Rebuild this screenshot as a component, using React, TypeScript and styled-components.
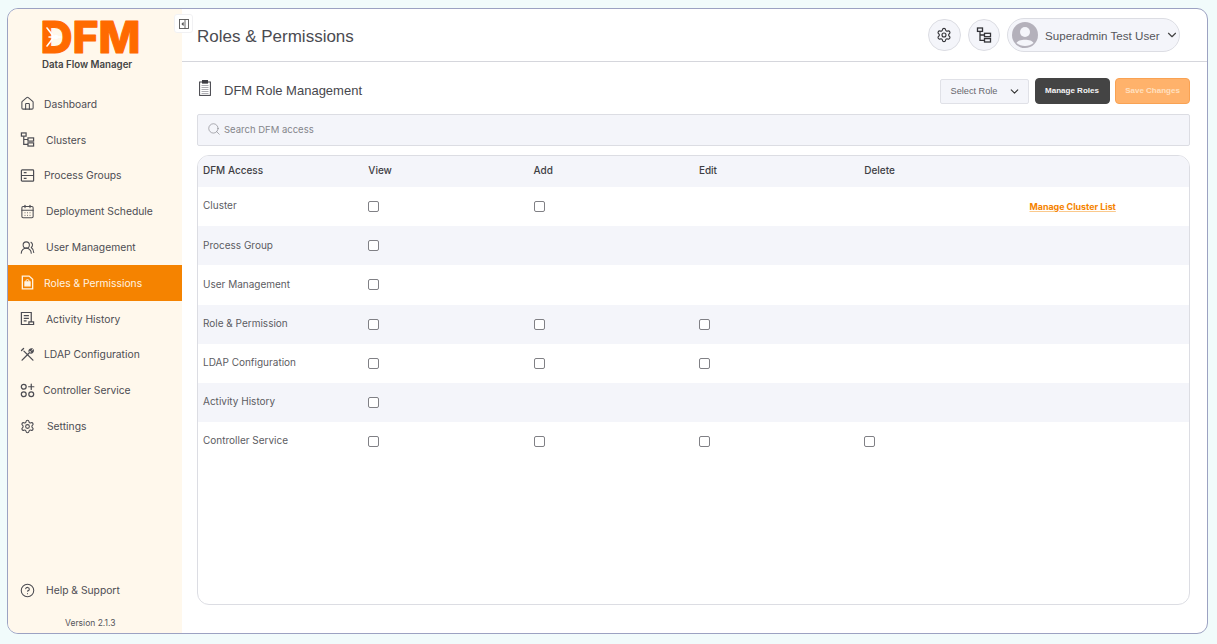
import React from 'react'
import styled, { createGlobalStyle } from 'styled-components'
import { CalendarDays, ChevronDown, CircleHelp, House, Search, Settings, UsersRound } from 'lucide-react'

const GlobalStyle = createGlobalStyle`
  html, body {
    margin: 0;
    height: 100%;
    overflow: hidden;
    background: #f1fbfb;
  }
  #root {
    height: 100%;
  }
`

const Page = styled.div`
  box-sizing: border-box;
  height: 644px;
  padding: 8px 9px 10px 7px;
  font-family: Inter, 'Liberation Sans', sans-serif;
`

const Frame = styled.div`
  position: relative;
  display: flex;
  height: 100%;
  box-sizing: border-box;
  border: 1px solid #9ca2c2;
  border-radius: 11px;
  background: #ffffff;
  overflow: hidden;
`

const Sidebar = styled.aside`
  flex: 0 0 174px;
  display: flex;
  flex-direction: column;
  background: #fff8ec;
`

const LogoBlock = styled.div`
  height: 77px;
  box-sizing: border-box;
  padding: 11px 0 0 34px;
`

const LogoSvg = styled.svg`
  display: block;
  overflow: visible;
`

const LogoTagline = styled.div`
  margin-top: 5px;
  font-size: 9.7px;
  line-height: 12px;
  font-weight: 600;
  color: #444444;
  white-space: nowrap;
`

const Nav = styled.nav`
  display: flex;
  flex-direction: column;
`

const NavItem = styled.a<{ $active?: boolean; $gap: number }>`
  height: 35.8px;
  display: flex;
  align-items: center;
  gap: ${({ $gap }) => $gap}px;
  padding-left: 12px;
  font-size: 10.3px;
  color: ${({ $active }) => ($active ? '#fff3e2' : '#4d4d53')};
  background: ${({ $active }) => ($active ? '#f58300' : 'transparent')};
  white-space: nowrap;

  svg {
    flex: none;
    width: 15px;
    height: 15px;
  }
`

const SidebarFooter = styled.div`
  margin-top: auto;
`

const Version = styled.div`
  height: 25px;
  padding: 10px 0 0 57px;
  box-sizing: border-box;
  font-size: 8.5px;
  color: #55555b;
`

const CollapseButton = styled.button`
  position: absolute;
  left: 166px;
  top: 5px;
  width: 19px;
  height: 19px;
  padding: 0;
  display: flex;
  align-items: center;
  justify-content: center;
  border: 1px solid #f1f1f3;
  border-radius: 3px;
  background: #ffffff;
`

const Main = styled.main`
  flex: 1;
  min-width: 0;
  display: flex;
  flex-direction: column;
`

const Header = styled.header`
  height: 53px;
  flex: none;
  box-sizing: border-box;
  display: flex;
  align-items: center;
  padding: 3px 27px 0 15px;
  border-bottom: 1px solid #d5d6dc;
`

const PageTitle = styled.h1`
  margin: 0;
  font-family: 'Liberation Sans', sans-serif;
  font-size: 17px;
  font-weight: 400;
  color: #4b4b51;
`

const HeaderActions = styled.div`
  margin-left: auto;
  margin-top: -3px;
  display: flex;
  align-items: center;
  gap: 7px;
`

const RoundButton = styled.button`
  width: 32.5px;
  height: 32.5px;
  padding: 0;
  display: flex;
  align-items: center;
  justify-content: center;
  border: 1px solid #dcdde3;
  border-radius: 50%;
  background: #f4f5fa;
  color: #333338;

  svg {
    width: 16px;
    height: 16px;
  }
`

const UserPill = styled.div`
  width: 173px;
  height: 34px;
  box-sizing: border-box;
  display: flex;
  align-items: center;
  padding-left: 4px;
  border: 1px solid #dcdde3;
  border-radius: 17px;
  background: #f4f5fa;
  font-family: 'Liberation Sans', sans-serif;
  font-size: 11.6px;
  color: #55555b;
  white-space: nowrap;

  svg {
    flex: none;
  }
`

const UserName = styled.span`
  margin-left: 7px;
  margin-right: 5px;
`

const Content = styled.div`
  flex: 1;
  min-height: 0;
  display: flex;
  flex-direction: column;
  padding: 16px 17px 28px 15px;
`

const Toolbar = styled.div`
  display: flex;
  align-items: center;
  height: 26px;
`

const SectionIcon = styled.svg`
  flex: none;
  margin: -6px 0 0 2px;
`

const SectionTitle = styled.h2`
  margin: -2px 0 0 13px;
  font-family: 'Liberation Sans', sans-serif;
  font-size: 13px;
  font-weight: 400;
  color: #47474d;
`

const ToolbarActions = styled.div`
  margin-left: auto;
  display: flex;
  align-items: center;
  gap: 5.5px;
  font-family: 'Liberation Sans', sans-serif;
`

const RoleSelect = styled.div`
  width: 89.5px;
  height: 25px;
  box-sizing: border-box;
  display: flex;
  align-items: center;
  justify-content: space-between;
  padding: 0 7px 0 10px;
  border: 1px solid #e0e1e7;
  border-radius: 2px;
  background: #f4f5fa;
  font-size: 9.2px;
  color: #66666c;
`

const ActionButton = styled.button<{ $primary?: boolean }>`
  width: 75px;
  height: 26px;
  padding: 0 0 2px;
  border: 1px solid ${({ $primary }) => ($primary ? '#f9a253' : '#444444')};
  border-radius: 4px;
  background: ${({ $primary }) => ($primary ? '#ffb26b' : '#444444')};
  color: ${({ $primary }) => ($primary ? '#ffe0c0' : '#f4f4f6')};
  font-family: 'Liberation Sans', sans-serif;
  font-size: 8px;
  font-weight: 700;
`

const SearchBar = styled.div`
  height: 32px;
  flex: none;
  box-sizing: border-box;
  margin-top: 10px;
  display: flex;
  align-items: center;
  gap: 3px;
  padding: 0 0 2px 9px;
  border: 1px solid #dcdde3;
  border-radius: 2px;
  background: #f4f5fa;
  font-size: 9.5px;
  color: #85858b;
`

const TableCard = styled.div`
  flex: 1;
  margin-top: 9px;
  border: 1px solid #dcdde3;
  border-radius: 12px;
  background: #ffffff;
  overflow: hidden;
`

const Row = styled.div<{ $shaded?: boolean; $header?: boolean }>`
  height: ${({ $header }) => ($header ? '31px' : '39.2px')};
  box-sizing: border-box;
  display: grid;
  grid-template-columns: repeat(6, 165.3px);
  align-items: center;
  padding: 0 0 ${({ $header }) => ($header ? '4px' : '0')} 5px;
  background: ${({ $shaded }) => ($shaded ? '#f4f5fa' : '#ffffff')};
  font-size: 10px;
  font-weight: ${({ $header }) => ($header ? 500 : 400)};
  color: ${({ $header }) => ($header ? '#3e3e44' : '#5c5c62')};
`

const Cell = styled.div`
  display: flex;
  align-items: center;
`

const RowLabel = styled(Cell)`
  margin-top: -2.5px;
`

const Check = styled.input.attrs({ type: 'checkbox' })`
  appearance: none;
  width: 11px;
  height: 11px;
  margin: 0;
  box-sizing: border-box;
  border: 1px solid #808085;
  border-radius: 2px;
  background: #ffffff;
`

const ClusterLink = styled.a`
  font-size: 8.9px;
  font-weight: 700;
  color: #f58300;
  text-decoration: underline;
  text-decoration-color: #fbc98c;
  white-space: nowrap;
`

function ClusterIcon() {
  return (
    <svg viewBox="0 0 16 16" fill="none" stroke="currentColor" strokeWidth="1.3">
      <rect x="1.5" y="1" width="5" height="3.4" />
      <rect x="8.5" y="6.3" width="6" height="3.4" />
      <rect x="8.5" y="11.6" width="6" height="3.4" />
      <path d="M4 4.4V13.3H8.5M4 8H8.5" />
    </svg>
  )
}

function ProcessIcon() {
  return (
    <svg viewBox="0 0 16 16" fill="none" stroke="currentColor" strokeWidth="1.3">
      <rect x="1.5" y="2" width="13" height="12" rx="0.8" />
      <path d="M1.5 8H14.5M4 5H7M4 11H7" />
    </svg>
  )
}

function RoleIcon() {
  return (
    <svg viewBox="0 0 16 16" fill="none" stroke="currentColor" strokeWidth="1.4">
      <path d="M2.5 1.2H9.8L13.5 4.6V14.8H2.5Z" />
      <rect x="5.3" y="7.4" width="5.4" height="4.2" fill="currentColor" />
      <path d="M6.3 7.4V6.4C6.3 4.3 9.7 4.3 9.7 6.4V7.4" strokeWidth="1" />
    </svg>
  )
}

function HistoryIcon() {
  return (
    <svg viewBox="0 0 16 16" fill="none" stroke="currentColor" strokeWidth="1.3">
      <path d="M12 12V1.6H1.5V14.4H14.5V11.6H9.5V14.4" />
      <path d="M4 5H9.5M4 7.8H9.5M4 10.6H7" />
    </svg>
  )
}

function ToolsIcon() {
  return (
    <svg viewBox="0 0 16 16" fill="none" stroke="currentColor" strokeWidth="1.4" strokeLinecap="round">
      <path d="M2.2 14L10 6.2M13.8 14L4.2 4.4" />
      <path d="M1.6 3.8L3.8 1.6" />
      <path d="M9.6 4.6C9.6 3 11 1.8 12.6 2L11.2 3.6L12.6 5L14.2 3.6C14.4 5.2 13 6.6 11.4 6.4" />
    </svg>
  )
}

function ControllerIcon() {
  return (
    <svg viewBox="0 0 16 16" fill="none" stroke="currentColor" strokeWidth="1.3" strokeLinecap="round">
      <circle cx="4" cy="4" r="2.6" />
      <circle cx="4" cy="12" r="2.6" />
      <circle cx="12" cy="12" r="2.6" />
      <path d="M12 1.2V6.8M9.2 4H14.8" />
    </svg>
  )
}

function ClipboardIcon() {
  return (
    <SectionIcon width="12" height="16" viewBox="0 0 12 16" fill="none" stroke="#3e3e44" strokeWidth="1">
      <rect x="0.6" y="2" width="10.8" height="13.4" />
      <rect x="3.5" y="0.5" width="5" height="2.6" fill="#3e3e44" />
      <path d="M2.5 5.5H9.5M2.5 7.5H9.5M2.5 9.5H9.5M2.5 11.5H9.5M2.5 13.5H9.5" stroke="#8a8a90" strokeWidth="0.7" />
    </SectionIcon>
  )
}

function PanelIcon() {
  return (
    <svg width="10" height="10" viewBox="0 0 10 10" fill="none" stroke="#555" strokeWidth="0.9">
      <rect x="0.5" y="0.5" width="9" height="9" />
      <path d="M6 0.5V9.5" />
      <path d="M4.2 3.6L2.8 5L4.2 6.4Z" fill="#555" />
    </svg>
  )
}

function Avatar() {
  return (
    <svg width="26" height="26" viewBox="0 0 26 26">
      <circle cx="13" cy="13" r="13" fill="#b4b1bb" />
      <circle cx="13" cy="10" r="5" fill="#f4f5fa" />
      <path d="M4.5 21C6 16.5 20 16.5 21.5 21C17 25 9 25 4.5 21Z" fill="#f4f5fa" />
    </svg>
  )
}

function Logo() {
  return (
    <LogoSvg width="98" height="34" viewBox="0 0 98 34">
      <text
        x="-1.5"
        y="33"
        textLength="100"
        lengthAdjust="spacingAndGlyphs"
        fontFamily="Inter, 'Liberation Sans', sans-serif"
        fontSize="44"
        fontWeight="800"
        fill="#ff6a00"
        stroke="#ff6a00"
        strokeWidth="1"
        strokeLinejoin="round"
      >
        DFM
      </text>
      <path
        d="M5 8L12 17L5 26M7 17H19"
        fill="none"
        stroke="#fff"
        strokeWidth="1.6"
        strokeLinecap="round"
        strokeLinejoin="round"
      />
      <circle cx="14" cy="17" r="2.2" fill="#fff" />
    </LogoSvg>
  )
}

const navItems = [
  { label: 'Dashboard', icon: <House strokeWidth={1.7} />, gap: 9 },
  { label: 'Clusters', icon: <ClusterIcon />, gap: 11 },
  { label: 'Process Groups', icon: <ProcessIcon />, gap: 9 },
  { label: 'Deployment Schedule', icon: <CalendarDays strokeWidth={1.7} />, gap: 11 },
  { label: 'User Management', icon: <UsersRound strokeWidth={1.7} />, gap: 11 },
  { label: 'Roles & Permissions', icon: <RoleIcon />, gap: 9, active: true },
  { label: 'Activity History', icon: <HistoryIcon />, gap: 11 },
  { label: 'LDAP Configuration', icon: <ToolsIcon />, gap: 9 },
  { label: 'Controller Service', icon: <ControllerIcon />, gap: 8 },
  { label: 'Settings', icon: <Settings strokeWidth={1.7} />, gap: 12 },
]

// checks = how many of view, add, edit, delete the row offers
const accessRows: { name: string; checks: number; link?: string }[] = [
  { name: 'Cluster', checks: 2, link: 'Manage Cluster List' },
  { name: 'Process Group', checks: 1 },
  { name: 'User Management', checks: 1 },
  { name: 'Role & Permission', checks: 3 },
  { name: 'LDAP Configuration', checks: 3 },
  { name: 'Activity History', checks: 1 },
  { name: 'Controller Service', checks: 4 },
]

export default function App() {
  return (
    <Page>
      <GlobalStyle />
      <Frame>
        <Sidebar>
          <LogoBlock>
            <Logo />
            <LogoTagline>Data Flow Manager</LogoTagline>
          </LogoBlock>
          <Nav>
            {navItems.map((item) => (
              <NavItem key={item.label} $gap={item.gap} $active={item.active}>
                {item.icon}
                {item.label}
              </NavItem>
            ))}
          </Nav>
          <SidebarFooter>
            <NavItem $gap={11}>
              <CircleHelp strokeWidth={1.7} />
              Help &amp; Support
            </NavItem>
            <Version>Version 2.1.3</Version>
          </SidebarFooter>
        </Sidebar>
        <CollapseButton>
          <PanelIcon />
        </CollapseButton>
        <Main>
          <Header>
            <PageTitle>Roles &amp; Permissions</PageTitle>
            <HeaderActions>
              <RoundButton>
                <Settings strokeWidth={1.7} />
              </RoundButton>
              <RoundButton>
                <ClusterIcon />
              </RoundButton>
              <UserPill>
                <Avatar />
                <UserName>Superadmin Test User</UserName>
                <ChevronDown size={14} strokeWidth={2} color="#444" />
              </UserPill>
            </HeaderActions>
          </Header>
          <Content>
            <Toolbar>
              <ClipboardIcon />
              <SectionTitle>DFM Role Management</SectionTitle>
              <ToolbarActions>
                <RoleSelect>
                  Select Role
                  <ChevronDown size={13} strokeWidth={2} color="#333" />
                </RoleSelect>
                <ActionButton>Manage Roles</ActionButton>
                <ActionButton $primary>Save Changes</ActionButton>
              </ToolbarActions>
            </Toolbar>
            <SearchBar>
              <Search size={14} strokeWidth={1} color="#77777d" />
              Search DFM access
            </SearchBar>
            <TableCard>
              <Row $header $shaded>
                <Cell>DFM Access</Cell>
                <Cell>View</Cell>
                <Cell>Add</Cell>
                <Cell>Edit</Cell>
                <Cell>Delete</Cell>
              </Row>
              {accessRows.map((row, i) => (
                <Row key={row.name} $shaded={i % 2 === 1}>
                  <RowLabel>{row.name}</RowLabel>
                  {[0, 1, 2, 3].map((n) => (
                    <Cell key={n}>{n < row.checks && <Check />}</Cell>
                  ))}
                  <Cell>{row.link && <ClusterLink>{row.link}</ClusterLink>}</Cell>
                </Row>
              ))}
            </TableCard>
          </Content>
        </Main>
      </Frame>
    </Page>
  )
}
